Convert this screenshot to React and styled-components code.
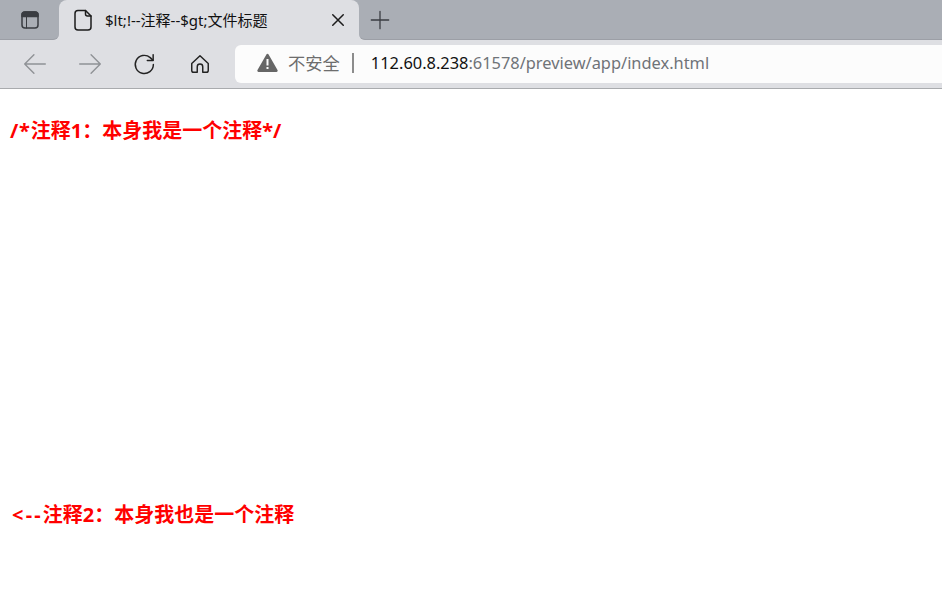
import React from "react";
import styled, { createGlobalStyle } from "styled-components";

const GlobalStyle = createGlobalStyle`
	html, body {
		margin: 0;
		padding: 0;
		background: #fff;
	}
	body {
		width: 942px;
		height: 603px;
		overflow: hidden;
		font-family: "Noto Sans", "Noto Sans CJK SC", sans-serif;
	}
`;

const UI_FONT = `"Noto Sans", "Noto Sans CJK SC", sans-serif`;

const TabBar = styled.div`
	display: flex;
	height: 40px;
	background: linear-gradient(#aaaeb5 50%, #dedfe3 50%);
`;

const TabToggle = styled.div`
	display: flex;
	align-items: center;
	justify-content: center;
	width: 59px;
	box-sizing: border-box;
	background: #aaaeb5;
	border-bottom: 1px solid #9c9fa6;
	border-radius: 0 0 6px 0;
`;

const Tab = styled.div`
	display: flex;
	align-items: center;
	width: 300px;
	padding: 0 12px 0 12px;
	box-sizing: border-box;
	background: #dedfe3;
	border-radius: 8px 8px 0 0;
`;

const TabTitle = styled.span`
	flex: 1;
	margin-left: 10px;
	padding-bottom: 2px;
	font-family: ${UI_FONT};
	font-size: 15px;
	color: #111;
	white-space: nowrap;
`;

const NewTab = styled.div`
	display: flex;
	align-items: center;
	flex: 1;
	padding-left: 10px;
	box-sizing: border-box;
	background: #aaaeb5;
	border-bottom: 1px solid #9c9fa6;
	border-radius: 0 0 0 6px;
`;

const Toolbar = styled.div`
	display: flex;
	align-items: center;
	height: 49px;
	box-sizing: border-box;
	padding: 5px 0 5px 7px;
	background: #dedfe3;
	border-bottom: 1px solid #a9abae;
`;

const NavButton = styled.div`
	display: flex;
	align-items: center;
	justify-content: center;
	width: 55px;
	height: 38px;
`;

const AddressBar = styled.div`
	display: flex;
	align-items: center;
	flex: 1;
	height: 38px;
	box-sizing: border-box;
	margin-left: 8px;
	padding: 0 0 3px 22px;
	background: #fcfcfc;
	border-radius: 6px 0 0 6px;
	font-family: ${UI_FONT};
	font-size: 16.4px;
	white-space: nowrap;
`;

const Insecure = styled.span`
	margin-left: 10px;
	font-size: 17.3px;
	color: #6d6d6d;
`;

const Divider = styled.span`
	width: 2px;
	height: 20px;
	margin: 0 17px 0 12px;
	background: #8c8c8c;
`;

const Host = styled.span`
	color: #111;
`;

const UrlRest = styled.span`
	color: #6f7378;
`;

const Page = styled.main`
	height: 514px;
	padding: 0 10px;
	box-sizing: border-box;
`;

const Note = styled.p`
	margin: 0;
	padding-top: ${(p) => p.$top}px;
	padding-left: ${(p) => p.$left || 0}px;
	height: ${(p) => p.$height}px;
	box-sizing: border-box;
	font-family: "Noto Sans", "Noto Sans CJK SC", sans-serif;
	font-size: 20px;
	line-height: 26px;
	font-weight: 700;
	color: #ff0000;
	white-space: pre;
`;

const Latin = styled.span`
	letter-spacing: ${(p) => p.$spacing}px;
`;

const Icon = ({ size = 24, children, color = "#333", width = 1.6 }) => (
	<svg
		width={size}
		height={size}
		viewBox="0 0 24 24"
		fill="none"
		stroke={color}
		strokeWidth={width}
		strokeLinecap="round"
		strokeLinejoin="round"
	>
		{children}
	</svg>
);

export default function App() {
	return (
		<>
			<GlobalStyle />
			<TabBar>
				<TabToggle>
					<Icon size={24} color="#3a3d42" width={1.5}>
						<rect x="4" y="4" width="16" height="16" rx="3" />
						<path d="M4 7a3 3 0 0 1 3-3h10a3 3 0 0 1 3 3v1.5H4z" fill="#3a3d42" />
						<path d="M8.5 8.5V20" strokeWidth="1" />
					</Icon>
				</TabToggle>
				<Tab>
					<Icon size={24} color="#1c1c1c" width={1.5}>
						<path d="M7 2.5h7.5L20 8v11a3 3 0 0 1-3 3H7a3 3 0 0 1-3-3V5.5a3 3 0 0 1 3-3z" />
						<path d="M14.5 2.5V6a2 2 0 0 0 2 2H20" />
					</Icon>
					<TabTitle>$lt;!--注释--$gt;文件标题</TabTitle>
					<Icon size={18} color="#1c1c1c" width={2}>
						<path d="M5 5l14 14M19 5L5 19" />
					</Icon>
				</Tab>
				<NewTab>
					<Icon size={22} color="#3a3d42" width={1.4}>
						<path d="M12 2.5v19M2.5 12h19" />
					</Icon>
				</NewTab>
			</TabBar>
			<Toolbar>
				<NavButton>
					<Icon size={26} color="#8f9296" width={1.3}>
						<path d="M21.5 12h-19M11 3.5L2.5 12l8.5 8.5" />
					</Icon>
				</NavButton>
				<NavButton>
					<Icon size={26} color="#8f9296" width={1.3}>
						<path d="M2.5 12h19M13 3.5l8.5 8.5-8.5 8.5" />
					</Icon>
				</NavButton>
				<NavButton>
					<Icon size={25} color="#222" width={1.4}>
						<path d="M20.5 12a8.7 8.7 0 1 1-3-6.6l2.5 2.4" />
						<path d="M20.3 2.5v5.6h-5.6" />
					</Icon>
				</NavButton>
				<NavButton>
					<Icon size={22} color="#222" width={1.6}>
						<path d="M3 11.5L12 3l9 8.5V19a2 2 0 0 1-2 2h-4v-6a3 3 0 0 0-6 0v6H5a2 2 0 0 1-2-2z" />
					</Icon>
				</NavButton>
				<AddressBar>
					<svg width="21" height="19" viewBox="0 0 21 19">
						<path
							d="M10.5 0.8a1.3 1.3 0 0 1 1.1.7l8.9 15.6a1.2 1.2 0 0 1-1 1.8H1.5a1.2 1.2 0 0 1-1-1.8L9.4 1.5a1.3 1.3 0 0 1 1.1-.7z"
							fill="#666"
						/>
						<rect x="9.5" y="6" width="2" height="6.5" fill="#fcfcfc" />
						<rect x="9.5" y="14" width="2" height="2" fill="#fcfcfc" />
					</svg>
					<Insecure>不安全</Insecure>
					<Divider />
					<Host>112.60.8.238</Host>
					<UrlRest>:61578/preview/app/index.html</UrlRest>
				</AddressBar>
			</Toolbar>
			<Page>
				<Note $top={29} $height={413}>
					<Latin $spacing={0.8}>/*</Latin>注释1：本身我是一个注释*/
				</Note>
				<Note $top={0} $left={2} $height={40}>
					<Latin $spacing={2.2}>{"<--"}</Latin>注释2：本身我也是一个注释
				</Note>
			</Page>
		</>
	);
}
